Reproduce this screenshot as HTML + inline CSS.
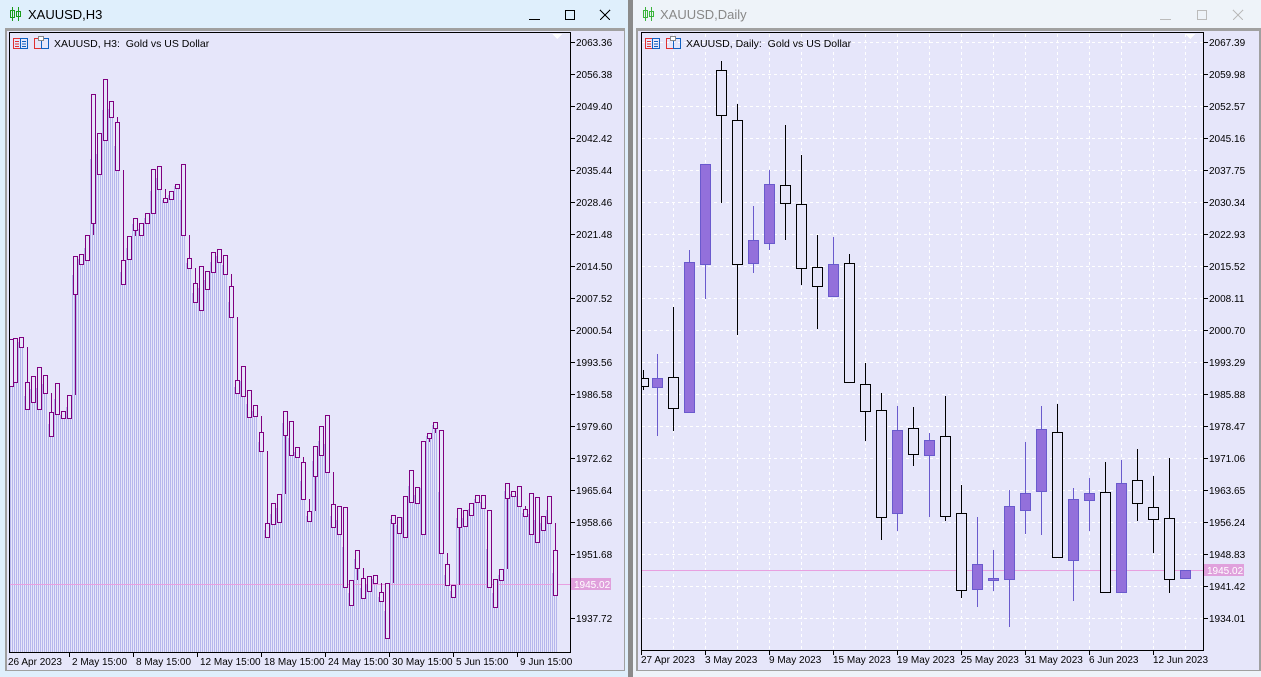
<!DOCTYPE html>
<html><head><meta charset="utf-8">
<style>
html,body{margin:0;padding:0;width:1261px;height:677px;overflow:hidden;background:#dfeffc;font-family:"Liberation Sans",sans-serif;}
.abs{position:absolute}
</style></head>
<body>
<div class="abs" style="left:0;top:0;width:628px;height:677px;background:#dfeffc"></div>
<div class="abs" style="left:628px;top:0;width:5px;height:677px;background:#8a8a8a"></div>
<div class="abs" style="left:633px;top:0;width:628px;height:677px;background:#eef3f9"></div>
<svg class="abs" style="left:0;top:0" width="1261" height="677" xmlns="http://www.w3.org/2000/svg" id="s" shape-rendering="crispEdges"></svg>
<script>
var s=document.getElementById('s');var h='';
function R(x,y,w,hh,f,st,sw){h+='<rect x="'+x+'" y="'+y+'" width="'+w+'" height="'+hh+'" fill="'+f+'"'+(st?' stroke="'+st+'" stroke-width="'+(sw||1)+'"':'')+'/>';}
function L(x1,y1,x2,y2,c,extra){h+='<line x1="'+x1+'" y1="'+y1+'" x2="'+x2+'" y2="'+y2+'" stroke="'+c+'" stroke-width="1" '+(extra||'')+'/>';}
function T(x,y,t,c,sz,anchor){h+='<text shape-rendering="auto" x="'+x+'" y="'+y+'" fill="'+c+'" font-size="'+sz+'" font-family="Liberation Sans, sans-serif"'+(anchor?' text-anchor="'+anchor+'"':'')+'>'+t+'</text>';}
function candleIcon(x,c){L(x+2.5,7,x+2.5,21,c);R(x+0.5,10.5,4,7,'none',c);L(x+8.5,7,x+8.5,21,c);R(x+6.5,11.5,4,5,'none',c);}
candleIcon(10,'#1a9c1a');T(28,19,'XAUUSD,H3','#000',13);
L(529,19.5,540,19.5,'#000');R(565.5,10.5,9,9,'none','#000');L(600,10,610,20,'#000');L(610,10,600,20,'#000');
candleIcon(643,'#3cb43c');T(660,19,'XAUUSD,Daily','#888',13);
L(1160,19.5,1171,19.5,'#bbb');R(1197.5,10.5,9,9,'none','#bbb');L(1233,10,1243,20,'#bbb');L(1243,10,1233,20,'#bbb');
R(5,28,620,643,'#a0a0a0');R(7,31,617,639,'#e6e6fa');
R(636,28,625,643,'#a0a0a0');R(638,31,621,639,'#e6e6fa');
function hdrIcons(x,title){
 R(x+0.5,38.5,7,10,'none','#e03030');R(x+7.5,38.5,7,10,'none','#1060c0');
 for(var i=0;i<3;i++){L(x+2,41.5+i*2.5,x+6,41.5+i*2.5,'#e03030');L(x+9,41.5+i*2.5,x+13,41.5+i*2.5,'#1060c0');}
 R(x+21.5,38.5,7,10,'none','#e03030');R(x+28.5,38.5,7,10,'none','#1060c0');R(x+25.5,36.5,5,4,'#fff','#888');
 T(x+41,47,title,'#000',10.5);}
var LB=[[9,339,386],[13,338,382],[19,337,347],[25,382,409,347],[31,376,402],[37,367,409],[43,375,393],[49,412,436,393],[55,383,414],[61,411,418],[67,395,418],[73,256,294,0,395],[79,254,264],[85,235,260],[91,94,223,0,235],[97,133,174],[103,79,140],[109,101,117],[115,122,170,117],[121,260,284,170],[127,236,259],[133,218,230,0,236],[139,223,235],[145,213,223],[151,169,213],[157,166,189],[163,198,202,189],[169,191,199],[175,184,188],[181,164,235],[187,258,268,235],[193,283,302,268],[199,266,310],[205,271,289],[211,252,272],[217,249,262],[223,255,274],[229,286,317,274],[235,380,393,317],[241,366,396],[247,390,417],[253,405,416],[259,432,451,416],[265,523,537,451],[271,503,524],[277,494,522],[283,411,435,0,494],[289,421,455],[295,447,457],[301,462,499,457],[307,511,521,499],[313,446,476,0,511],[319,426,455],[325,415,472],[331,504,527,472],[337,506,534],[343,507,587],[349,580,605],[355,550,568,0,580],[361,578,598,568],[367,576,591],[373,575,583],[379,592,601,583],[385,583,638],[391,515,523,0,583],[397,517,533],[403,496,537],[409,470,502],[415,487,503],[421,441,534],[427,433,438,0,442],[433,422,428,0,433],[439,430,553],[445,564,585,553],[451,585,597],[457,508,527,0,585],[463,510,526],[469,503,515],[475,495,502],[481,495,508],[487,510,587],[493,579,607],[499,569,580],[505,483,498,0,569],[511,491,496],[517,486,506],[523,509,516,506],[529,493,534],[535,497,542],[541,516,530],[547,496,523],[553,550,595,523]];
h+='<defs><pattern id="st" width="2" height="4" patternUnits="userSpaceOnUse"><rect x="0" y="0" width="1" height="4" fill="#b6b6ec"/></pattern><clipPath id="lc"><rect x="10" y="34" width="560" height="618"/></clipPath><clipPath id="rc"><rect x="642" y="34" width="561" height="616"/></clipPath></defs>';
h+='<g clip-path="url(#lc)">';
LB.forEach(function(c){var x=c[0],m=Math.round((c[1]+c[2])/2);R(x-1,m,6,652-m,'url(#st)');});
L(10,584.5,570,584.5,'#e8a0e0');
LB.forEach(function(c){var x=c[0]+2.5;if(c[3])L(x,c[3],x,c[1],'#800080');if(c[4])L(x,c[2],x,c[4],'#800080');h+='<rect x="'+(c[0]+0.5)+'" y="'+(c[1]+0.5)+'" width="4" height="'+Math.max(1,c[2]-c[1])+'" fill="#e6e6fa" stroke="#800080" stroke-width="1"/>';});
h+='</g>';
R(9.5,32.5,561,620,'none','#000');
h+='<polygon points="552,34 562,34 557,39" fill="#fff"/>';
hdrIcons(13,'XAUUSD, H3:&#160; Gold vs US Dollar');
var lp=['2063.36','2056.38','2049.40','2042.42','2035.44','2028.46','2021.48','2014.50','2007.52','2000.54','1993.56','1986.58','1979.60','1972.62','1965.64','1958.66','1951.68','','1937.72'];
lp.forEach(function(p,i){if(!p)return;var y=42+i*32;L(570,y+0.5,575,y+0.5,'#000');T(576,y+4,p,'#000',10);});
R(571,578,40,12,'#e0a0dc');T(574,588,'1945.02','#fff',10);
var ld=[['26 Apr 2023',8],['2 May 15:00',72],['8 May 15:00',136],['12 May 15:00',200],['18 May 15:00',264],['24 May 15:00',328],['30 May 15:00',392],['5 Jun 15:00',456],['9 Jun 15:00',520]];
ld.forEach(function(d,i){if(i>0)L(d[1]-2.5,652,d[1]-2.5,657,'#000');T(d[1],665,d[0],'#000',10);});
h+='<g clip-path="url(#rc)">';
for(var x=673;x<1203;x+=32)L(x+0.5,34,x+0.5,650,'#fff','stroke-dasharray="3,3"');
for(var y=42;y<650;y+=32)L(642,y+0.5,1203,y+0.5,'#fff','stroke-dasharray="3,3"');
L(642,570.5,1203,570.5,'#e8a0e0');
var RC=[[643,378,386,370,390,0],[657,378,387,354,436,1],[673,377,408,307,431,0],[689,262,412,250,412,1],[705,164,264,164,299,1],[721,70,115,61,203,0],[737,120,264,104,335,0],[753,240,263,206,273,1],[769,184,243,170,250,1],[785,185,203,125,240,0],[801,204,268,155,285,0],[817,267,286,235,329,0],[833,264,296,237,296,1],[849,263,382,254,382,0],[865,384,411,363,441,0],[881,410,517,393,540,0],[897,430,513,406,531,1],[913,428,454,407,466,0],[929,440,455,433,517,1],[945,436,516,396,521,0],[961,513,590,485,598,0],[977,564,589,517,607,1],[993,578,580,550,591,1],[1009,506,579,490,627,1],[1025,493,510,442,534,1],[1041,429,491,406,535,1],[1057,432,557,404,558,0],[1073,499,560,488,601,1],[1089,493,500,478,531,1],[1105,492,592,462,593,0],[1121,483,592,460,592,1],[1137,480,503,449,521,0],[1153,507,519,476,553,0],[1169,518,579,458,593,0],[1185,570,578,570,578,1]];
RC.forEach(function(c){var x=c[0],bull=c[5],col=bull?'#6a5acd':'#000';L(x+0.5,c[3],x+0.5,c[4],col);h+='<rect x="'+(x-4.5)+'" y="'+(c[1]+0.5)+'" width="10" height="'+Math.max(1,c[2]-c[1])+'" fill="'+(bull?'#9370db':'#e6e6fa')+'" stroke="'+col+'" stroke-width="1"/>';});
h+='</g>';
R(641.5,32.5,562,618,'none','#000');
h+='<polygon points="1185,34 1195,34 1190,39" fill="#fff"/>';
hdrIcons(645,'XAUUSD, Daily:&#160; Gold vs US Dollar');
var rp=['2067.39','2059.98','2052.57','2045.16','2037.75','2030.34','2022.93','2015.52','2008.11','2000.70','1993.29','1985.88','1978.47','1971.06','1963.65','1956.24','1948.83','1941.42','1934.01'];
rp.forEach(function(p,i){var y=42+i*32;L(1203,y+0.5,1208,y+0.5,'#000');T(1209,y+4,p,'#000',10);});
R(1204,564,40,12,'#e0a0dc');T(1207,574,'1945.02','#fff',10);
var rd=[['27 Apr 2023',641],['3 May 2023',705],['9 May 2023',769],['15 May 2023',833],['19 May 2023',897],['25 May 2023',961],['31 May 2023',1025],['6 Jun 2023',1089],['12 Jun 2023',1153]];
rd.forEach(function(d){L(d[1]+0.5,650,d[1]+0.5,655,'#000');T(d[1],663,d[0],'#000',10);});
s.innerHTML=h;
</script>
</body></html>
